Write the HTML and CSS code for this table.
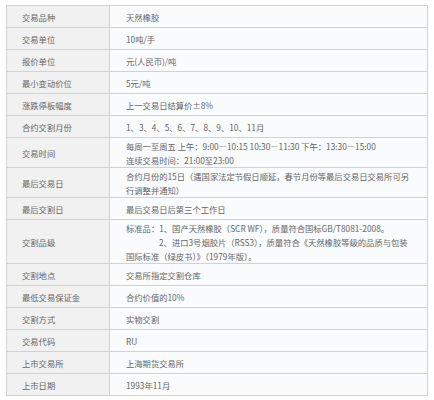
FILE: index.html
```html
<!DOCTYPE html>
<html lang="zh-CN">
<head>
<meta charset="utf-8">
<link rel="stylesheet" href="styles.css">
</head>
<body>
<div class="spec">
  <div class="k">交易品种</div><div class="v">天然橡胶</div>
  <div class="k">交易单位</div><div class="v">10吨/手</div>
  <div class="k">报价单位</div><div class="v">元(人民币)/吨</div>
  <div class="k">最小变动价位</div><div class="v">5元/吨</div>
  <div class="k">涨跌停板幅度</div><div class="v">上一交易日结算价±8%</div>
  <div class="k">合约交割月份</div><div class="v">1、3、4、5、6、7、8、9、10、11月</div>
  <div class="k">交易时间</div><div class="v">每周一至周五 上午：9:00—10:15 10:30—11:30 下午：13:30—15:00<br>连续交易时间：21:00至23:00</div>
  <div class="k">最后交易日</div><div class="v">合约月份的15日（遇国家法定节假日顺延，春节月份等最后交易日交易所可另<br>行调整并通知）</div>
  <div class="k">最后交割日</div><div class="v">最后交易日后第三个工作日</div>
  <div class="k">交割品级</div><div class="v">标准品：1、国产天然橡胶（SCR WF），质量符合国标GB/T8081-2008。<br><span class="indent"></span>2、进口3号烟胶片（RSS3），质量符合《天然橡胶等级的品质与包装<br>国际标准（绿皮书）》（1979年版）。</div>
  <div class="k">交割地点</div><div class="v">交易所指定交割仓库</div>
  <div class="k">最低交易保证金</div><div class="v">合约价值的10%</div>
  <div class="k">交割方式</div><div class="v">实物交割</div>
  <div class="k">交易代码</div><div class="v">RU</div>
  <div class="k">上市交易所</div><div class="v">上海期货交易所</div>
  <div class="k">上市日期</div><div class="v">1993年11月</div>
</div>
</body>
</html>
```
FILE: styles.css
```css
html, body {
  margin: 0;
  padding: 0;
  background: #ffffff;
}
body {
  padding: 5px 0 0 6px;
  font-family: "Noto Sans CJK SC", "Noto Sans", sans-serif;
  font-size: 8.3px;
  color: #666666;
}
.spec {
  width: 422px;
  box-sizing: border-box;
  display: grid;
  grid-template-columns: 103px 1fr;
  border-top: 1px solid #d2d2d2;
  border-left: 1px solid #d2d2d2;
}
.k, .v {
  box-sizing: border-box;
  min-height: 22px;
  padding: 1px 8px 0 15px;
  line-height: 14px;
  display: flex;
  flex-direction: column;
  justify-content: center;
  border-right: 1px solid #d2d2d2;
  border-bottom: 1px solid #d2d2d2;
}
.v {
  display: block;
  align-self: stretch;
  padding-left: 16px;
  background: #fafbfd;
}
.v:not(:has(br)) {
  display: flex;
  flex-direction: column;
  justify-content: center;
}
.k {
  background: #f1f1f1;
}
.indent {
  display: inline-block;
  width: 33px;
}
```
